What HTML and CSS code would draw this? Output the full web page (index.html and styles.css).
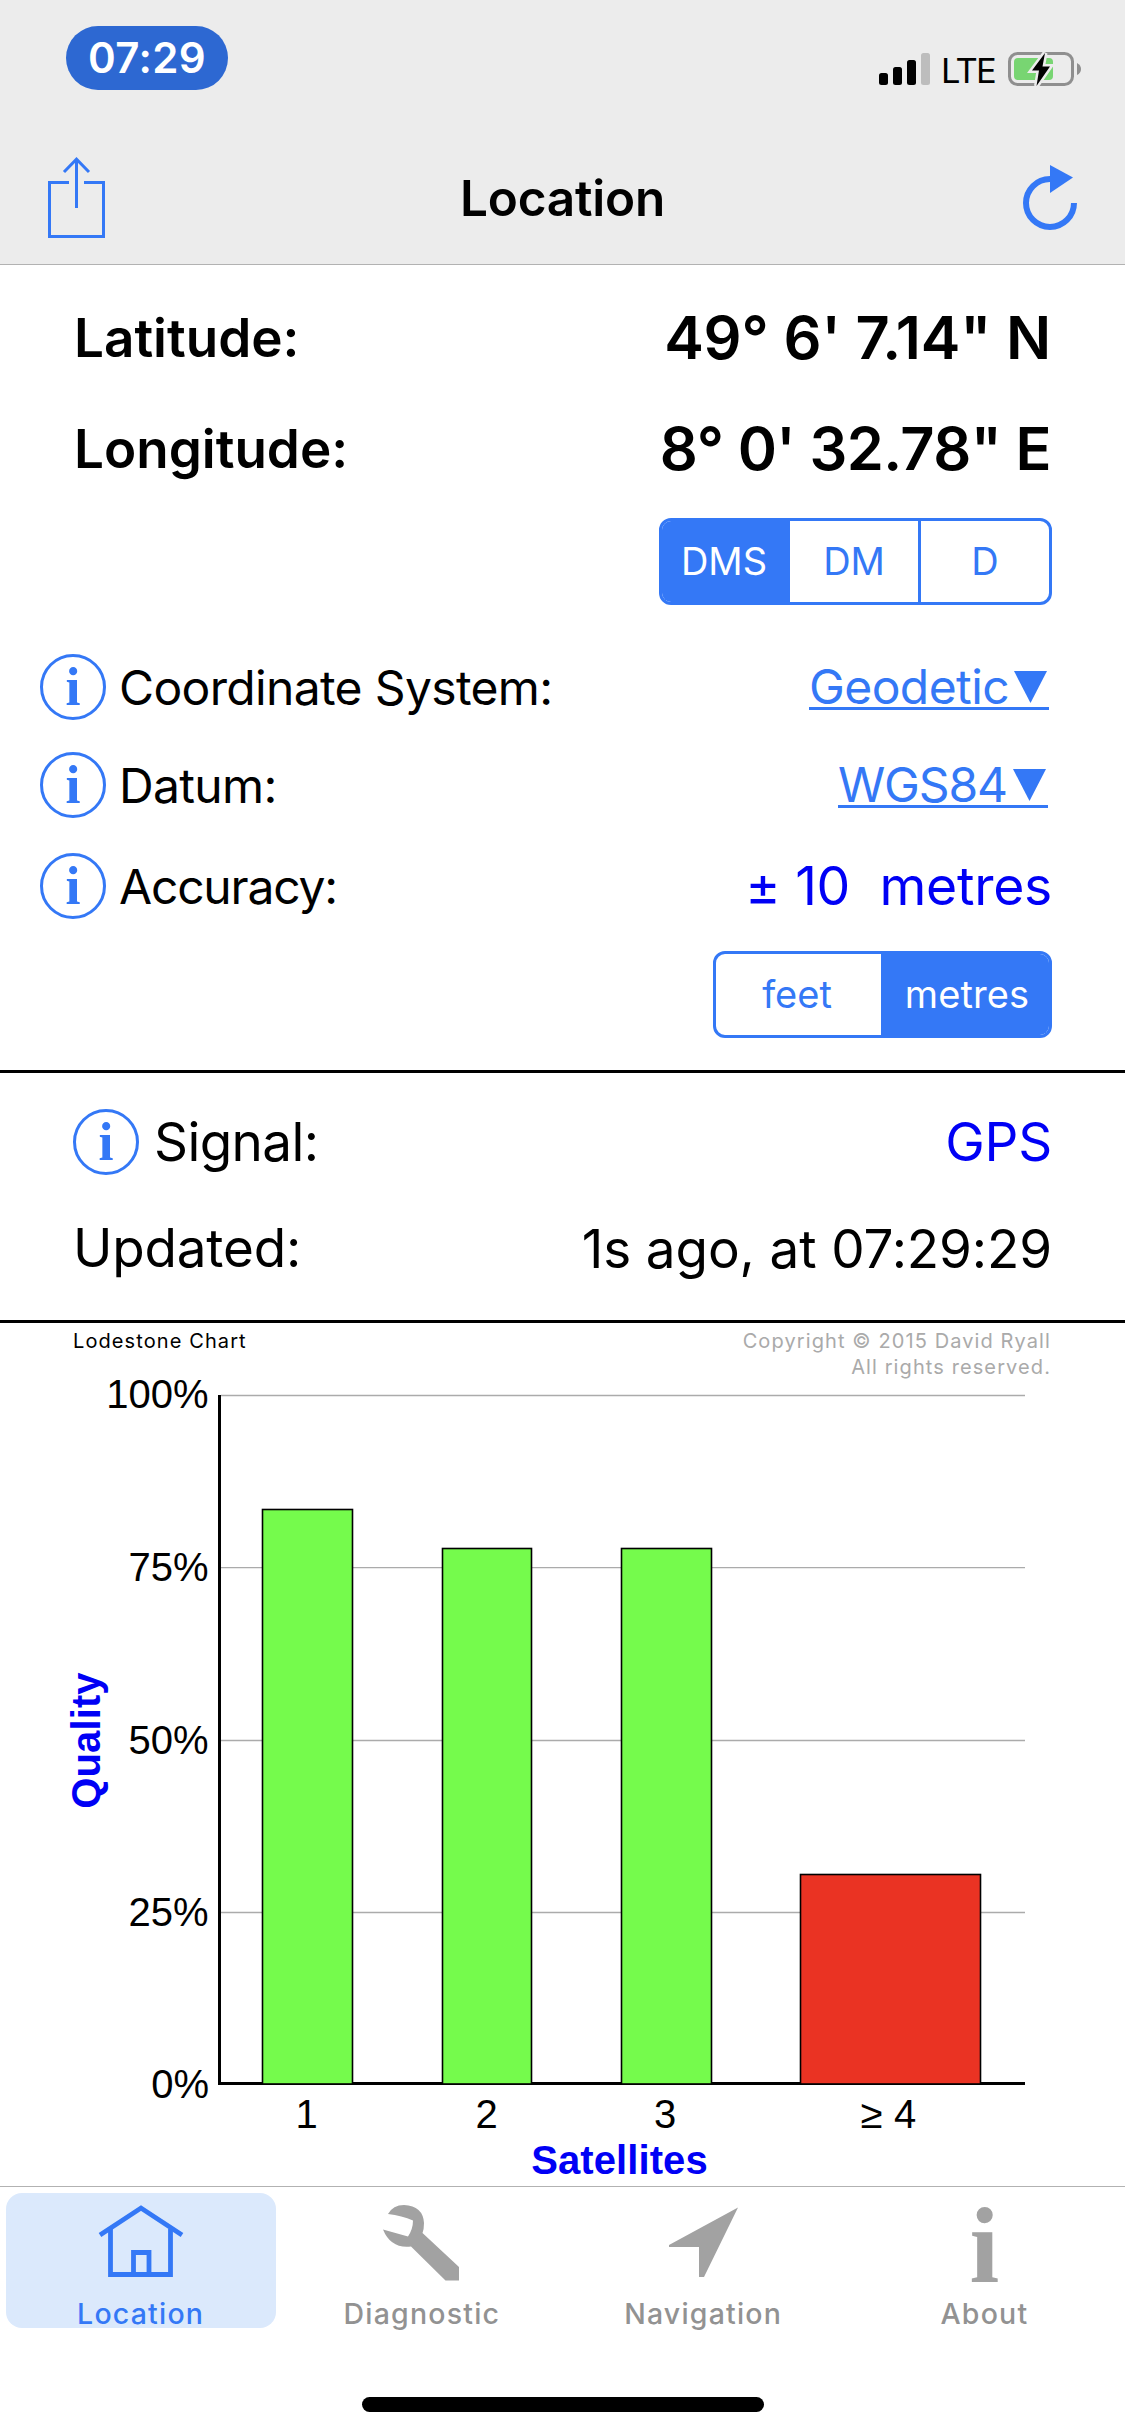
FILE: index.html
```html
<!DOCTYPE html>
<html lang="en">
<head>
  <meta charset="UTF-8" />
  <meta name="viewport" content="width=device-width, initial-scale=1.0" />
  <title>Location</title>
  <link rel="stylesheet" href="styles.css">
</head>
<body>
  <header class="header">
    <div class="status">
      <span class="clock">07:29</span>
      <div class="status-icons">
        <svg class="cell" width="51" height="32" viewBox="0 0 51 32">
          <rect x="0" y="20" width="9" height="12" rx="2.5" />
          <rect x="14" y="14" width="9" height="18" rx="2.5" />
          <rect x="28" y="7" width="9" height="25" rx="2.5" />
          <rect x="42" y="0" width="9" height="32" rx="2.5" fill="#bdbdbd" />
        </svg>
        <span class="network">LTE</span>
        <svg class="battery" width="73" height="34" viewBox="0 0 73 34">
          <rect x="1.5" y="1.5" width="63" height="31" rx="8" fill="none" stroke="#8f8f8f" stroke-width="3" />
          <path d="M69 11 Q73 13 73 17 Q73 21 69 23 Z" fill="#8f8f8f" />
          <rect x="6" y="6" width="39" height="22" rx="4" fill="#78d572" />
          <path d="M37 1 L24 18.5 H31 L28.5 34 L42 14.5 H34.5 Z" fill="#000" stroke="#ececec" stroke-width="5" paint-order="stroke" />
        </svg>
      </div>
    </div>
    <div class="navbar">
      <a class="nav-btn" href="#" aria-label="Share">
        <svg width="57" height="81" viewBox="0 0 57 81" fill="none" stroke="currentColor" stroke-width="3">
          <path d="M21 25.5 H1.5 V79.5 H55.5 V25.5 H36" />
          <path d="M28.5 51 V2" />
          <path d="M16 15 L28.5 2.2 L41 15" />
        </svg>
      </a>
      <h1 class="title">Location</h1>
      <a class="nav-btn nav-btn-right" href="#" aria-label="Refresh">
        <svg width="54" height="65" viewBox="0 0 54 65">
          <path d="M27 14 A24 24 0 1 0 51 38" fill="none" stroke="currentColor" stroke-width="6" />
          <path d="M27 0 L50 12.5 L27 28 Z" fill="currentColor" />
        </svg>
      </a>
    </div>
  </header>

  <section class="coords">
    <div class="row row-big">
      <span class="label-big">Latitude:</span>
      <span class="value-big">49° 6' 7.14" N</span>
    </div>
    <div class="row row-big">
      <span class="label-big">Longitude:</span>
      <span class="value-big value-lon">8° 0' 32.78" E</span>
    </div>

    <div class="segment segment-format">
      <span class="seg active">DMS</span>
      <span class="seg">DM</span>
      <span class="seg divided">D</span>
    </div>

    <div class="row row-info">
      <span class="info">i</span>
      <span class="label">Coordinate System:</span>
      <a class="picker" href="#">Geodetic<svg width="33" height="32" viewBox="0 0 33 32"><path d="M0 0 H33 L16.5 32 Z" /></svg></a>
    </div>
    <div class="row row-info">
      <span class="info">i</span>
      <span class="label">Datum:</span>
      <a class="picker picker-datum" href="#">WGS84<svg width="33" height="32" viewBox="0 0 33 32"><path d="M0 0 H33 L16.5 32 Z" /></svg></a>
    </div>
    <div class="row row-info row-accuracy">
      <span class="info">i</span>
      <span class="label label-accuracy">Accuracy:</span>
      <span class="value blue accuracy">± 10&nbsp; metres</span>
    </div>

    <div class="segment segment-units">
      <span class="seg">feet</span>
      <span class="seg active">metres</span>
    </div>
  </section>

  <section class="signal">
    <div class="row row-signal">
      <span class="info">i</span>
      <span class="value signal-label">Signal:</span>
      <span class="value blue right">GPS</span>
    </div>
    <div class="row row-signal">
      <span class="value">Updated:</span>
      <span class="value right updated">1s ago, at 07:29:29</span>
    </div>
  </section>

  <section class="chart">
    <div class="chart-head">
      <span>Lodestone Chart</span>
      <span class="copyright">Copyright © 2015 David Ryall<br>All rights reserved.</span>
    </div>
    <svg class="plot" width="1125" height="816" viewBox="0 -10 1125 816">
      <!-- grid -->
      <g stroke="#ababab" stroke-width="1.4">
        <line x1="221" y1="15.5" x2="1025" y2="15.5" />
        <line x1="221" y1="187.6" x2="1025" y2="187.6" />
        <line x1="221" y1="360.5" x2="1025" y2="360.5" />
        <line x1="221" y1="532.5" x2="1025" y2="532.5" />
      </g>
      <!-- axes -->
      <path d="M219.5 15 V703.5 H1025" fill="none" stroke="#000" stroke-width="3" />
      <!-- bars -->
      <g stroke="#000" stroke-width="1.6">
        <rect class="good" x="262.5" y="129.5" width="90" height="574.5" />
        <rect class="good" x="442.5" y="168.5" width="89" height="535.5" />
        <rect class="good" x="621.5" y="168.5" width="90" height="535.5" />
        <rect class="bad" x="800.5" y="494.5" width="180" height="209.5" />
      </g>
      <g class="tick" text-anchor="end">
        <text x="208.5" y="28">100%</text>
        <text x="208.5" y="201">75%</text>
        <text x="208.5" y="373.5">50%</text>
        <text x="208.5" y="546">25%</text>
        <text x="209" y="718">0%</text>
      </g>
      <g class="tick" text-anchor="middle">
        <text x="306.5" y="748">1</text>
        <text x="486.5" y="748">2</text>
        <text x="665" y="748">3</text>
        <text x="888.5" y="748">≥ 4</text>
      </g>
      <text class="axis-title" x="619.5" y="794" text-anchor="middle">Satellites</text>
      <text class="axis-title" transform="translate(100 360.5) rotate(-90)" text-anchor="middle">Quality</text>
    </svg>
  </section>

  <nav class="tabbar">
    <div class="tabs">
      <a class="tab current" href="#">
        <svg width="90" height="80" viewBox="0 0 90 80" fill="none" stroke="currentColor" stroke-width="4.8">
          <path d="M4 32 L45 5 L86 32" />
          <path d="M14.5 26 V71.5 H74.5 V26" />
          <path d="M37.5 71 V49.5 H53 V71" />
        </svg>
        <span class="tab-name">Location</span>
      </a>
      <a class="tab" href="#">
        <svg width="90" height="80" viewBox="0 0 90 80">
          <path d="M6 26.5 L31 33.5 Q36 26 36 17.5 Q25 12.5 11 11 Q16 2 27 2 Q46 3 47 20 Q47 26 45.5 30 L82 64 V77.5 H68.5 L34 43.5 Q14 46 6 26.5 Z" />
        </svg>
        <span class="tab-name">Diagnostic</span>
      </a>
      <a class="tab" href="#">
        <svg width="90" height="80" viewBox="0 0 90 80">
          <path d="M80 4.5 L11 42 V44 H41 V74 H46 Z" />
        </svg>
        <span class="tab-name">Navigation</span>
      </a>
      <a class="tab" href="#">
        <span class="tab-letter">i</span>
        <span class="tab-name">About</span>
      </a>
    </div>
    <div class="home-bar"></div>
  </nav>
</body>
</html>
```
FILE: styles.css
```css
* { box-sizing: border-box; }
body { margin: 0; width: 1125px; height: 2436px; font-family: Inter, "Liberation Sans", sans-serif; background: #fff; color: #000; white-space: nowrap; }
a { color: #3478f6; text-decoration: none; }
svg { display: block; flex: none; }

/* header */
.header { height: 265px; background: #ececec; border-bottom: 1px solid #b2b2b2; }
.status { display: flex; justify-content: space-between; height: 132px; padding: 26px 44px 0 66px; }
.clock { width: 162px; height: 64px; line-height: 64px; border-radius: 32px; background: #2d68d2; color: #fff; font-size: 42px; font-weight: 600; letter-spacing: 0.4px; text-align: center; }
.status-icons { display: flex; align-items: center; height: 34px; margin-top: 26px; }
.network { margin: 3px 13px 0 11px; font-size: 34.5px; line-height: 34px; letter-spacing: -1.7px; }
.navbar { display: grid; grid-template-columns: 1fr auto 1fr; align-items: center; height: 132px; padding: 0 48px; }
.nav-btn { margin-bottom: 2px; }
.nav-btn-right { justify-self: end; }
.title { margin: 0; font-size: 49.5px; font-weight: 600; letter-spacing: -0.2px; }

/* coordinates */
.coords { height: 808px; padding-top: 17px; border-bottom: 3px solid #000; }
.row { display: flex; align-items: center; padding-right: 73px; }
.row-big { height: 111px; padding-left: 74px; justify-content: space-between; font-weight: 600; }
.label-big { font-size: 53px; }
.value-big { margin: 0 1px 2px 0; font-size: 59.5px; letter-spacing: -0.15px; }
.value-lon { letter-spacing: -0.6px; }
.row-info { height: 98px; padding-left: 40px; }
.row-accuracy { height: 104px; }
.info { width: 66px; height: 66px; border: 3px solid #3478f6; border-radius: 50%; color: #3478f6; font: bold 54px/60px "Liberation Serif", serif; text-align: center; }
.label { margin-left: 13px; font-size: 48px; letter-spacing: -0.65px; }
.label-accuracy { letter-spacing: -1.2px; }
.value { font-size: 53px; letter-spacing: -0.2px; }
.blue { color: #0000f5; }
.accuracy { margin: 0 0 2px auto; font-size: 53.5px; letter-spacing: -0.3px; }
.right { margin-left: auto; }
.picker { display: flex; align-items: center; margin: 2px 3px 0 auto; padding-right: 2px; border-bottom: 3px solid #3478f6; font-size: 48px; line-height: 41px; letter-spacing: -0.6px; }
.picker svg { margin-left: 5px; fill: currentColor; }
.picker-datum { margin-right: 4px; letter-spacing: -1.1px; }
.picker-datum svg { margin-left: 6px; }

.segment { display: flex; height: 87px; margin-left: auto; margin-right: 73px; border: 3px solid #3478f6; border-radius: 12px; overflow: hidden; font-size: 38px; line-height: 81px; color: #3478f6; text-align: center; }
.segment-format { width: 393px; margin-top: 14px; margin-bottom: 33px; }
.segment-units { width: 339px; margin-top: 13px; }
.seg { flex: 1; }
.seg.active { background: #3478f6; color: #fff; }
.seg.divided { border-left: 3px solid #3478f6; }
.segment-format .active { text-indent: -4px; }
.segment-units .seg { flex: none; width: 165px; text-indent: -3px; }
.segment-units .active { width: 168px; text-indent: 4px; letter-spacing: 0.1px; }

/* signal */
.signal { height: 250px; padding-top: 16px; border-bottom: 3px solid #000; }
.row-signal { height: 106px; padding-left: 73px; }
.signal-label { margin-left: 15px; letter-spacing: -0.6px; }
.updated { margin-top: 2px; letter-spacing: -0.1px; }

/* chart */
.chart { height: 863px; }
.chart-head { display: flex; justify-content: space-between; height: 57px; padding: 5px 74px 0 73px; font-size: 20px; line-height: 26px; letter-spacing: 1.1px; }
.copyright { color: #aaa; text-align: right; }
.plot { margin-top: -10px; }
.tick { font: 40px "Liberation Sans", Arial, sans-serif; }
.axis-title { font: bold 40px "Liberation Sans", Arial, sans-serif; letter-spacing: 0.1px; fill: #0000f5; }
.good { fill: #75fb4c; }
.bad { fill: #ea3323; }

/* tab bar */
.tabbar { height: 250px; border-top: 1px solid #b2b2b2; }
.tabs { display: grid; grid-template-columns: repeat(4, 1fr); padding-top: 6px; }
.tab { display: flex; flex-direction: column; align-items: center; width: 270px; height: 135px; justify-self: center; padding-top: 10px; border-radius: 16px; font-size: 28.5px; font-weight: 500; line-height: 29px; color: #929292; }
.tab-name { margin-top: 16px; letter-spacing: 1.2px; }
.tab svg { fill: #a2a2a2; }
.tab-letter { height: 80px; font: bold 107px/86px "Liberation Serif", serif; color: #a2a2a2; }
.tab.current { background: #dbe9fc; color: #3478f6; }
.tab.current svg { fill: none; }
.home-bar { width: 402px; height: 15px; margin: 69px auto 0; border-radius: 8px; background: #000; }
```
